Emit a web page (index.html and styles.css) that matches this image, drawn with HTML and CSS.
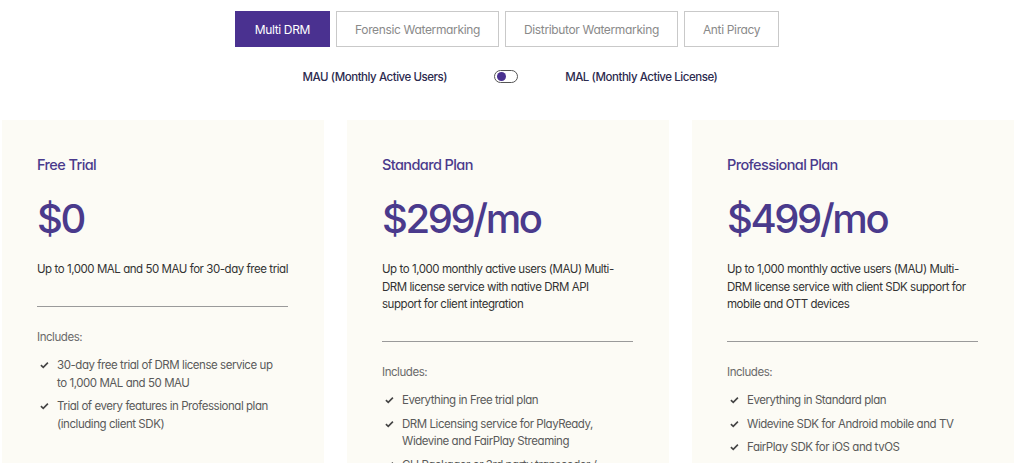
FILE: index.html
```html
<!DOCTYPE html>
<html lang="en">
<head>
<meta charset="utf-8">
<title>Pricing</title>
<link rel="stylesheet" href="styles.css">
</head>
<body>
<div class="page">
  <nav class="tabs">
    <button class="tab active">Multi DRM</button>
    <button class="tab">Forensic Watermarking</button>
    <button class="tab">Distributor Watermarking</button>
    <button class="tab">Anti Piracy</button>
  </nav>
  <div class="switch-row">
    <span class="switch-label">MAU (Monthly Active Users)</span>
    <span class="toggle"><span class="knob"></span></span>
    <span class="switch-label">MAL (Monthly Active License)</span>
  </div>
  <div class="cards">
    <section class="card">
      <h3 class="plan">Free Trial</h3>
      <div class="price">$0</div>
      <p class="desc desc-single">Up to 1,000 MAL and 50 MAU for 30-day free trial</p>
      <hr class="rule">
      <div class="includes">Includes:</div>
      <ul class="features">
        <li><svg class="check" viewBox="0 0 10 8"><path d="M1 4.2 L3.6 6.6 L8.8 1.4"/></svg><span>30-day free trial of DRM license service up to 1,000 MAL and 50 MAU</span></li>
        <li><svg class="check" viewBox="0 0 10 8"><path d="M1 4.2 L3.6 6.6 L8.8 1.4"/></svg><span>Trial of every features in Professional plan (including client SDK)</span></li>
      </ul>
    </section>
    <section class="card">
      <h3 class="plan">Standard Plan</h3>
      <div class="price">$299/mo</div>
      <p class="desc">Up to 1,000 monthly active users (MAU) Multi-DRM license service with native DRM API support for client integration</p>
      <hr class="rule">
      <div class="includes">Includes:</div>
      <ul class="features">
        <li><svg class="check" viewBox="0 0 10 8"><path d="M1 4.2 L3.6 6.6 L8.8 1.4"/></svg><span>Everything in Free trial plan</span></li>
        <li><svg class="check" viewBox="0 0 10 8"><path d="M1 4.2 L3.6 6.6 L8.8 1.4"/></svg><span>DRM Licensing service for PlayReady, Widevine and FairPlay Streaming</span></li>
        <li><svg class="check" viewBox="0 0 10 8"><path d="M1 4.2 L3.6 6.6 L8.8 1.4"/></svg><span>CLI Packager or 3rd party transcoder / packager integration</span></li>
      </ul>
    </section>
    <section class="card">
      <h3 class="plan">Professional Plan</h3>
      <div class="price">$499/mo</div>
      <p class="desc">Up to 1,000 monthly active users (MAU) Multi-DRM license service with client SDK support for mobile and OTT devices</p>
      <hr class="rule">
      <div class="includes">Includes:</div>
      <ul class="features">
        <li><svg class="check" viewBox="0 0 10 8"><path d="M1 4.2 L3.6 6.6 L8.8 1.4"/></svg><span>Everything in Standard plan</span></li>
        <li><svg class="check" viewBox="0 0 10 8"><path d="M1 4.2 L3.6 6.6 L8.8 1.4"/></svg><span>Widevine SDK for Android mobile and TV</span></li>
        <li><svg class="check" viewBox="0 0 10 8"><path d="M1 4.2 L3.6 6.6 L8.8 1.4"/></svg><span>FairPlay SDK for iOS and tvOS</span></li>
      </ul>
    </section>
  </div>
</div>
</body>
</html>
```

FILE: styles.css
```css
* { box-sizing: border-box; }
html, body { margin: 0; padding: 0; background: #fff; }
body {
  font-family: Inter, "Noto Sans", "Liberation Sans", sans-serif;
  font-feature-settings: "cv11";
  color: #333;
  overflow: hidden;
}
.page {
  width: 1024px;
  height: 463px;
  overflow: hidden;
  display: flex;
  flex-direction: column;
}

.tabs {
  flex: none;
  display: flex;
  justify-content: center;
  gap: 6px;
  padding: 11px 10px 0 0;
}
.tab {
  height: 36px;
  padding: 0 18px;
  border: 1px solid #c9c9c9;
  background: #fff;
  color: #8a8a8a;
  font-family: inherit;
  font-feature-settings: "cv11";
  font-size: 12px;
  letter-spacing: -0.35px;
}
.tab.active {
  background: #4a3190;
  border-color: #4a3190;
  color: #fff;
  padding: 0 19px;
}

.switch-row {
  flex: none;
  display: flex;
  justify-content: center;
  align-items: center;
  gap: 47px;
  padding: 16px 4px 0 0;
  height: 43px;
}
.switch-label {
  font-size: 11.5px;
  font-weight: 500;
  color: #2c2a4e;
  letter-spacing: -0.45px;
}
.toggle {
  width: 24px;
  height: 13px;
  border: 1px solid #555;
  border-radius: 7px;
  display: flex;
  align-items: center;
  padding-left: 2px;
}
.knob {
  width: 9px;
  height: 9px;
  border-radius: 50%;
  background: #4a3190;
}

.cards {
  flex: 1 0 auto;
  display: grid;
  grid-template-columns: 322px 322px 322px;
  column-gap: 23px;
  padding: 30px 0 0 2px;
}
.card {
  background: #fcfbf5;
  padding: 35px 35px 0 35px;
}
.plan {
  margin: 0;
  font-size: 14.5px;
  line-height: 20px;
  font-weight: 500;
  color: #4a3a8c;
  letter-spacing: -0.6px;
}
.price {
  margin-top: 20px;
  font-size: 40px;
  line-height: 48px;
  font-weight: 500;
  color: #4a3a8c;
  letter-spacing: -2.4px;
}
.desc {
  margin: 18px 0 0;
  font-size: 11.5px;
  line-height: 17.5px;
  color: #333;
  letter-spacing: -0.45px;
  width: 248px;
}
.desc-single { white-space: nowrap; }
.rule {
  margin: 27px 0 0;
  width: 251px;
  border: 0;
  border-top: 1px solid #9a9a9a;
}
.includes {
  margin-top: 22px;
  font-size: 11.5px;
  line-height: 17.5px;
  color: #6a6a6a;
  letter-spacing: -0.45px;
}
.features {
  list-style: none;
  margin: 11px 0 0;
  padding: 0;
  display: flex;
  flex-direction: column;
  gap: 6px;
}
.features li {
  display: flex;
  gap: 8px;
  font-size: 11.5px;
  line-height: 17.5px;
  color: #5a5a5a;
  letter-spacing: -0.45px;
  width: 242px;
}
.check {
  flex: none;
  width: 9px;
  height: 8px;
  margin: 4px 0 0 3px;
  fill: none;
  stroke: #444;
  stroke-width: 1.8;
}
```
